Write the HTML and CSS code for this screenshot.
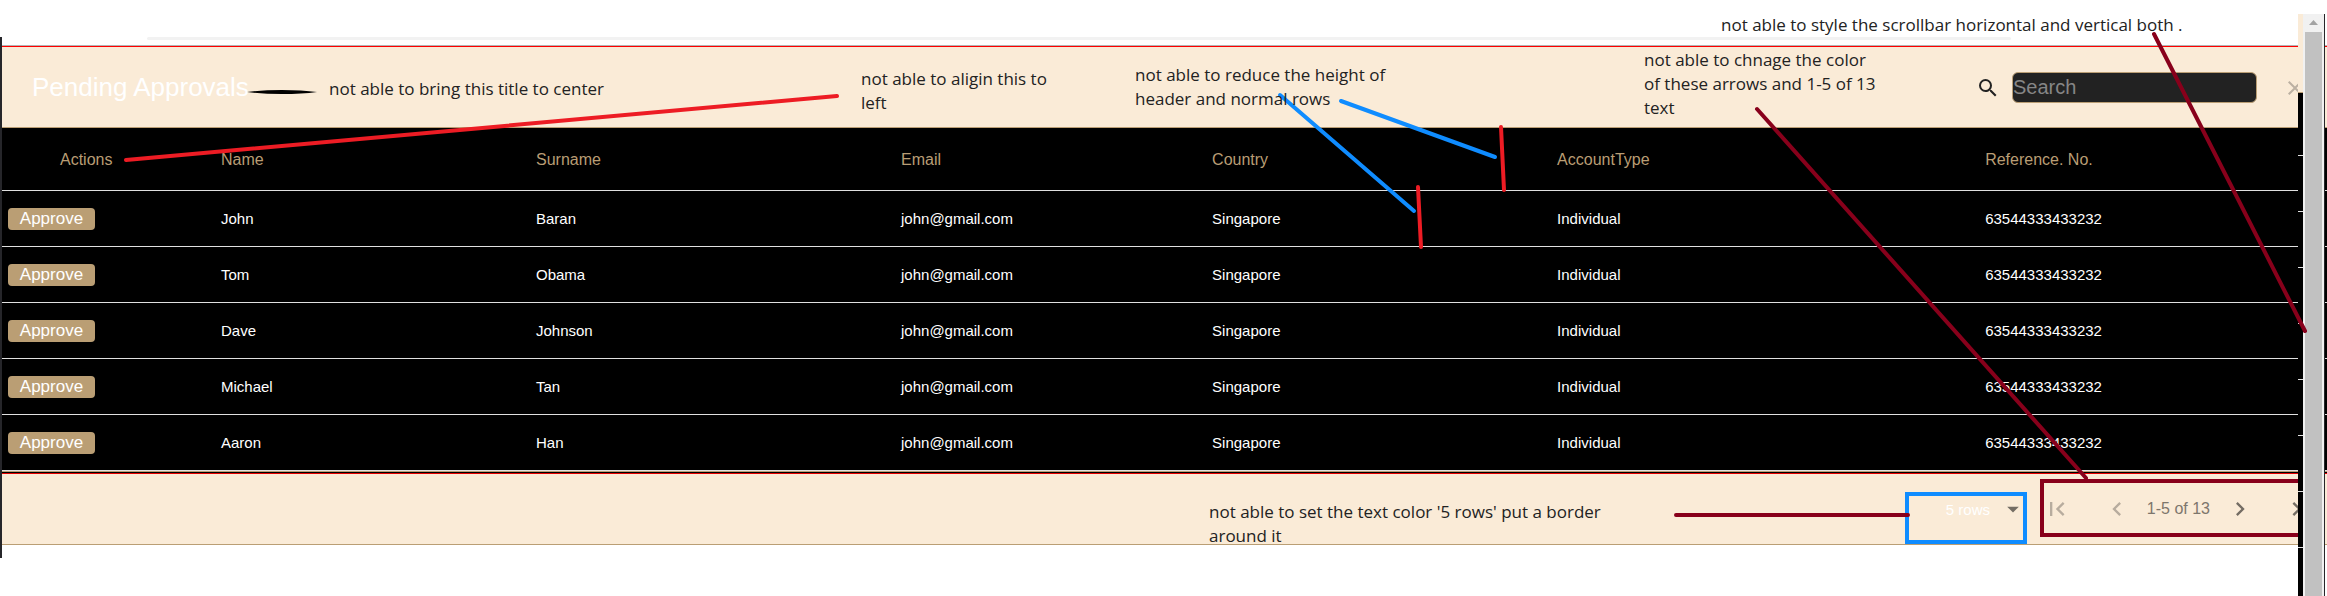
FILE: index.html
```html
<!DOCTYPE html>
<html lang="en">
<head>
<meta charset="utf-8">
<title>Pending Approvals</title>
<link rel="stylesheet" href="styles.css">
</head>
<body>
<main class="app">
  <div class="top-rule"></div>
  <header class="toolbar">
    <h1 class="title">Pending Approvals</h1>
    <label class="search-icon" for="search" aria-label="Search">
      <svg class="icon" viewBox="0 0 24 24"><path d="M15.5 14h-.79l-.28-.27A6.471 6.471 0 0 0 16 9.5 6.5 6.5 0 1 0 9.5 16c1.61 0 3.09-.59 4.23-1.57l.27.28v.79l5 4.99L20.49 19l-4.99-5zm-6 0C7.01 14 5 11.99 5 9.5S7.01 5 9.5 5 14 7.01 14 9.5 11.99 14 9.5 14z"/></svg>
    </label>
    <input class="search" id="search" type="text" placeholder="Search">
    <button class="clear" type="button" aria-label="Clear search">
      <svg class="icon" viewBox="0 0 24 24"><path d="M19 6.41L17.59 5 12 10.59 6.41 5 5 6.41 10.59 12 5 17.59 6.41 19 12 13.41 17.59 19 19 17.59 13.41 12z"/></svg>
    </button>
  </header>

  <table class="grid">
    <colgroup>
      <col class="c-actions"><col class="c-name"><col class="c-surname"><col class="c-email"><col class="c-country"><col class="c-type"><col>
    </colgroup>
    <thead>
      <tr><th class="actions-head">Actions</th><th>Name</th><th>Surname</th><th>Email</th><th>Country</th><th>AccountType</th><th>Reference. No.</th></tr>
    </thead>
    <tbody>
      <tr><td class="action"><button class="approve" type="button">Approve</button></td><td>John</td><td>Baran</td><td>john@gmail.com</td><td>Singapore</td><td>Individual</td><td>63544333433232</td></tr>
      <tr><td class="action"><button class="approve" type="button">Approve</button></td><td>Tom</td><td>Obama</td><td>john@gmail.com</td><td>Singapore</td><td>Individual</td><td>63544333433232</td></tr>
      <tr><td class="action"><button class="approve" type="button">Approve</button></td><td>Dave</td><td>Johnson</td><td>john@gmail.com</td><td>Singapore</td><td>Individual</td><td>63544333433232</td></tr>
      <tr><td class="action"><button class="approve" type="button">Approve</button></td><td>Michael</td><td>Tan</td><td>john@gmail.com</td><td>Singapore</td><td>Individual</td><td>63544333433232</td></tr>
      <tr><td class="action"><button class="approve" type="button">Approve</button></td><td>Aaron</td><td>Han</td><td>john@gmail.com</td><td>Singapore</td><td>Individual</td><td>63544333433232</td></tr>
    </tbody>
  </table>

  <footer class="pager">
    <div class="rows">
      <select class="rows-select" aria-label="Rows per page"><option>5 rows</option><option>10 rows</option></select>
      <svg class="rows-arrow" viewBox="0 0 24 24"><path d="M7 10l5 5 5-5z"/></svg>
    </div>
    <button class="page" type="button" disabled aria-label="First page"><svg class="chev" viewBox="0 0 24 24"><path d="M18.41 16.59L13.82 12l4.59-4.59L17 6l-6 6 6 6zM6 6h2v12H6z"/></svg></button>
    <button class="page" type="button" disabled aria-label="Previous page"><svg class="chev" viewBox="0 0 24 24"><path d="M15.41 7.41L14 6l-6 6 6 6 1.41-1.41L10.83 12z"/></svg></button>
    <span class="range">1-5 of 13</span>
    <button class="page" type="button" aria-label="Next page"><svg class="chev" viewBox="0 0 24 24"><path d="M10 6L8.59 7.41 13.17 12l-4.58 4.59L10 18l6-6z"/></svg></button>
    <button class="page" type="button" aria-label="Last page"><svg class="chev" viewBox="0 0 24 24"><path d="M5.59 7.41L10.18 12l-4.59 4.59L7 18l6-6-6-6zM16 6h2v12h-2z"/></svg></button>
  </footer>
</main>

<svg class="ink" viewBox="0 0 2327 596" aria-hidden="true">
  <path class="maroon-box" d="M2310 481H2042V535H2310"/>
</svg>

<aside class="side" aria-hidden="true">
  <div class="peek">
    <div class="peek-bar"></div>
    <div class="peek-head"></div>
    <div class="peek-row"></div><div class="peek-row"></div><div class="peek-row"></div><div class="peek-row"></div>
    <div class="peek-row"></div><div class="peek-row"></div><div class="peek-row"></div>
    <div class="peek-rest"></div>
  </div>
  <div class="track">
    <svg class="track-up" viewBox="0 0 17 18"><path d="M4 11L8.500 6 13 11z"/></svg>
    <div class="thumb"></div>
  </div>
</aside>

<svg class="ink" viewBox="0 0 2327 596" aria-hidden="true">
  <path class="black" d="M247 92Q262 90 282 90T317 92Q302 94 282 94T247 92z"/>
  <path class="red" d="M126 160L837 96M1501 127L1504 190M1418 187L1421 247"/>
  <path class="blue" d="M1280 95L1414 211M1341 101L1495 157"/>
  <path class="blue-box" d="M1907 494H2025V542H1907z"/>
  <path class="maroon" d="M1757 109L2086 478M2154 34L2305 331M1676 515H1908"/>
</svg>

<p class="note note-title">not able to bring this title to center</p>
<p class="note note-align">not able to aligin this to<br>left</p>
<p class="note note-height">not able to reduce the height of<br>header and normal rows</p>
<p class="note note-arrows">not able to chnage the color<br>of these arrows and 1-5 of 13<br>text</p>
<p class="note note-scroll">not able to style the scrollbar horizontal and vertical both .</p>
<p class="note note-rows">not able to set the text color '5 rows' put a border<br>around it</p>
</body>
</html>
```

FILE: styles.css
```css
* { box-sizing: border-box; }

body {
  position: relative;
  min-height: 100vh;
  margin: 0;
  padding-top: 37px;
  overflow: hidden;
  background: #fff;
  font-family: "Liberation Sans", Arial, sans-serif;
}

button, input, select { margin: 0; padding: 0; border: 0; background: none; font-family: inherit; }

.app {
  padding-bottom: 13px;
  border-left: 2px solid #26262a;
}

.top-rule {
  height: 3px;
  margin: 0 316px 5px 145px;
  border-radius: 2px;
  background: #f2f2f2;
}

.toolbar {
  display: flex;
  align-items: center;
  height: 83px;
  padding: 2px 20px 0 30px;
  border-top: 1px solid #b4b4b4;
  border-bottom: 1px solid #ba9e74;
  background: #faebd7;
  box-shadow: inset 0 1px #f00;
}

.title {
  flex: 1;
  margin: 0;
  color: #fff;
  font-size: 26px;
  font-weight: 400;
}

.icon { display: block; width: 24px; height: 24px; }
.search-icon { margin-right: 12px; fill: #222; }

.search {
  width: 245px;
  height: 31px;
  border: 1px solid #ba9e74;
  border-radius: 6px;
  background: #222;
  color: #fff;
  font-size: 20px;
}
.search::placeholder { color: #868686; }

.clear { margin-left: 26px; fill: #bbb0a2; }

.grid {
  width: 100%;
  border-collapse: separate;
  border-spacing: 0;
  table-layout: fixed;
  background: #000;
  color: #fff;
  font-size: 15px;
  text-align: left;
}
.c-actions { width: 8.73%; }
.c-name { width: 13.55%; }
.c-surname { width: 15.7%; }
.c-email { width: 13.38%; }
.c-country { width: 14.84%; }
.c-type { width: 18.41%; }

.grid th {
  height: 63px;
  padding: 2px 16px 0;
  border-bottom: 1px solid #e0e0e0;
  color: #b99d74;
  font-size: 16px;
  font-weight: 400;
}
.grid .actions-head { padding-left: 58px; }
.grid td { height: 56px; padding: 0 16px; border-bottom: 1px solid #e0e0e0; }
.grid .action { padding: 0 6px; }

.approve {
  display: block;
  width: 87px;
  height: 22px;
  border-radius: 4px;
  background: #ba9e74;
  color: #fff;
  font-size: 17px;
  line-height: 22px;
}

.pager {
  display: flex;
  align-items: center;
  justify-content: flex-end;
  height: 74px;
  padding-top: 2px;
  border-top: 1px solid #ba9e74;
  border-bottom: 1px solid #ba9e74;
  background: #faebd7;
  box-shadow: inset 0 1px #000, inset 0 2px #e60000;
}

.rows { display: flex; align-items: center; width: 81px; }
.rows-select {
  width: 53px;
  height: 28px;
  appearance: none;
  color: #fff;
  font-size: 15px;
}
.rows-arrow { width: 28px; height: 28px; fill: #746d64; }

.page { padding: 0 16px; fill: #746d64; }
.page:last-child { padding-right: 13px; }
.page:disabled { fill: #b7ac9e; }
.chev { display: block; width: 28px; height: 28px; }
.range { color: #7d766c; font-size: 16px; }

/* The page behind, with its own scrollbar, over the right edge */
.side {
  position: absolute;
  top: 14px;
  right: 2px;
  bottom: 0;
  display: flex;
  width: 27px;
  border-right: 1px solid #26262a;
}
.peek { display: flex; flex-direction: column; width: 5px; background: #000; }
.peek-bar { height: 79px; border-bottom: 1px solid #ba9e74; background: #faebd7; }
.peek-head { height: 63px; border-bottom: 1px solid #e0e0e0; }
.peek-row { height: 56px; border-bottom: 1px solid #e0e0e0; }
.peek-rest { flex: 1; }

.track {
  display: flex;
  flex: 1;
  flex-direction: column;
  padding: 0 2px;
  background: #f1f1f1;
}
.track-up { width: 17px; height: 18px; fill: #a3a3a3; }
.thumb { flex: 1; background: #c1c1c1; }

/* Hand-drawn marks and remarks over the page */
.ink { position: absolute; top: 0; left: 0; width: 100%; fill: none; pointer-events: none; }
.black { fill: #000; }
.red { stroke: #ed1c24; stroke-width: 4; stroke-linecap: round; }
.blue { stroke: #0f8cff; stroke-width: 4; stroke-linecap: round; }
.blue-box { stroke: #0f8cff; stroke-width: 4; }
.maroon { stroke: #88001b; stroke-width: 4; stroke-linecap: round; }
.maroon-box { stroke: #88001b; stroke-width: 4; }

.note {
  position: absolute;
  margin: 0;
  color: #222;
  font-family: "Open Sans", "Noto Sans", sans-serif;
  font-size: 17px;
  line-height: 24px;
  white-space: nowrap;
}
.note-title { top: 77px; left: 329px; }
.note-align { top: 67px; left: 861px; }
.note-height { top: 63px; left: 1135px; }
.note-arrows { top: 48px; left: 1644px; }
.note-scroll { top: 13px; left: 1721px; }
.note-rows { top: 500px; left: 1209px; }
```
